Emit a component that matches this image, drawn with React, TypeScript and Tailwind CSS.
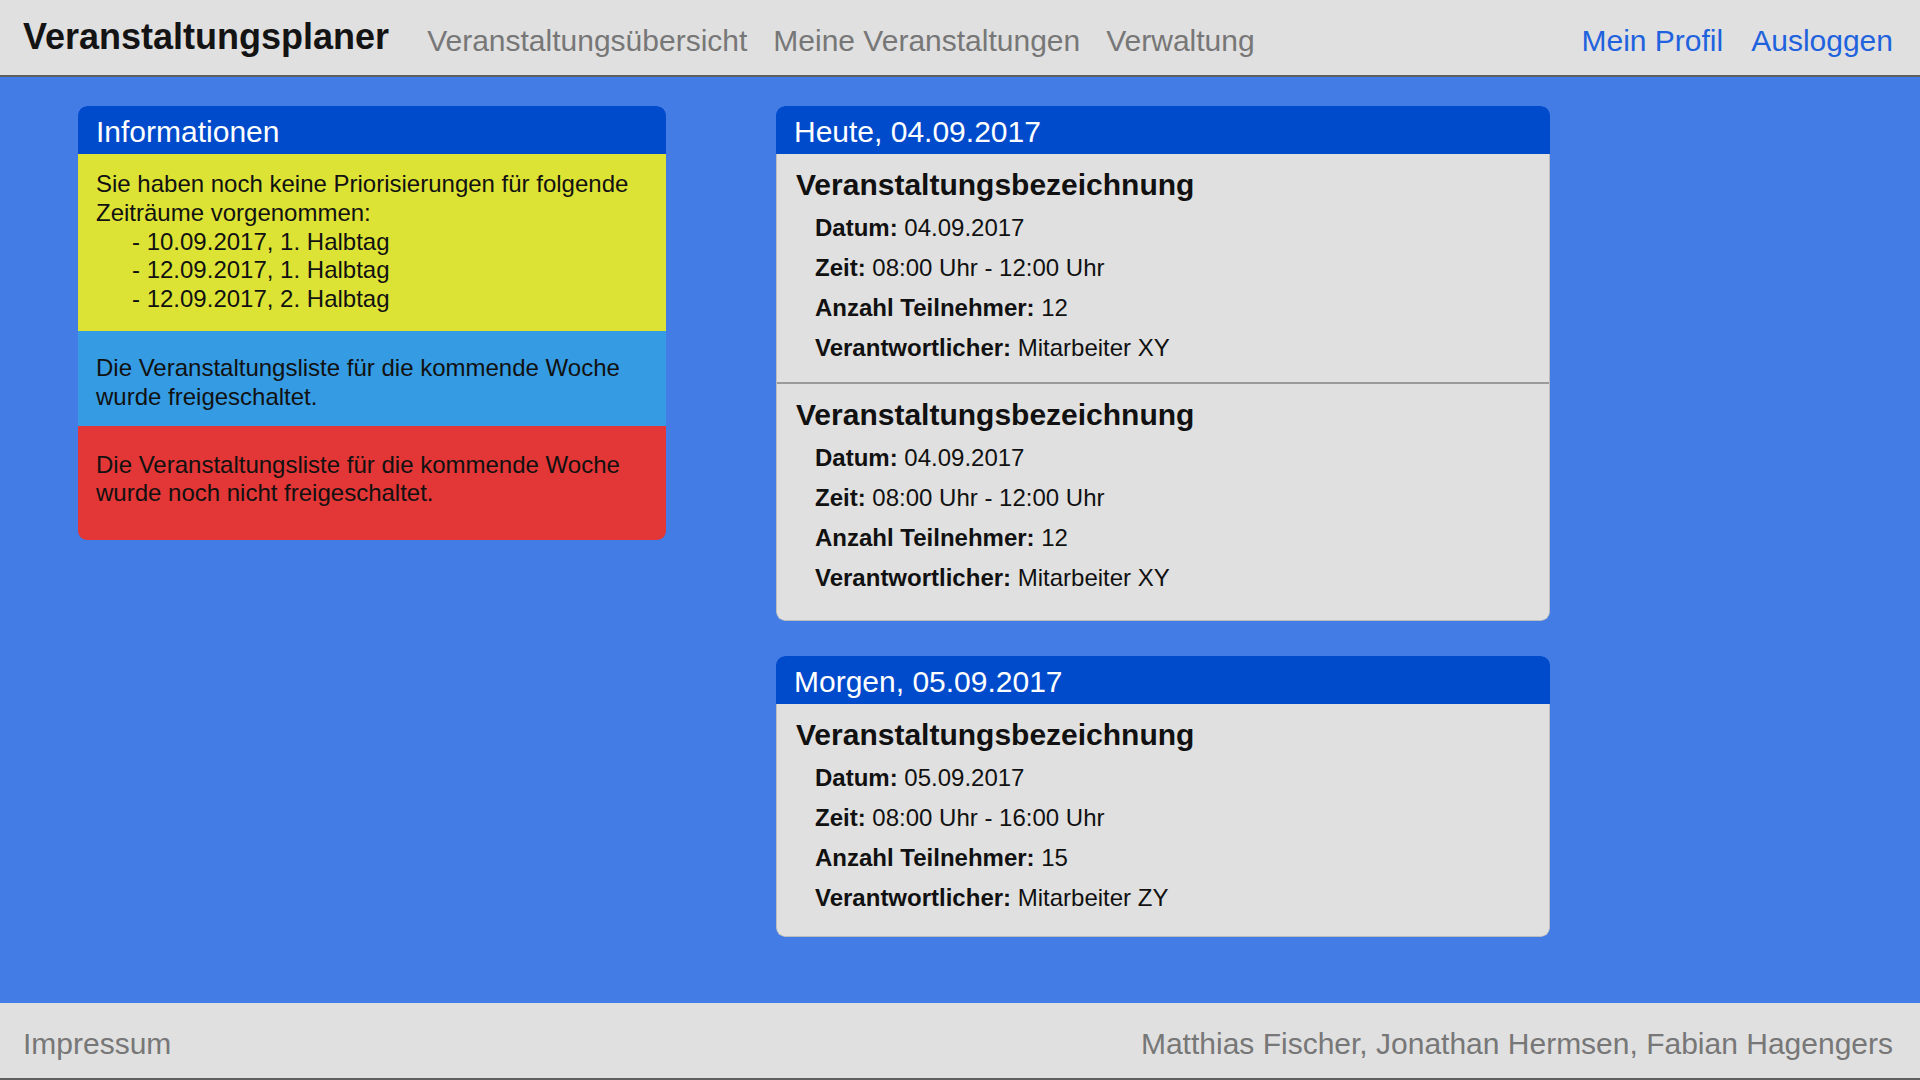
import React from "react";

const font = { fontFamily: '"Liberation Sans", Arial, Helvetica, sans-serif' };

type Ev = { datum: string; zeit: string; anzahl: string; verant: string };

function EventBlock({ ev, pb, sep }: { ev: Ev; pb: string; sep?: boolean }) {
  return (
    <div className={`pt-[13px] ${pb} ${sep ? "border-b-2 border-[#9a9a9a]" : ""}`}>
      <div className="pl-[19px] text-[30px] leading-[36px] font-bold text-[#111] mb-[5px]">
        Veranstaltungsbezeichnung
      </div>
      <div className="pl-[38px] text-[24px] leading-[40px] text-[#111]">
        <div>
          <span className="font-bold">Datum:</span> {ev.datum}
        </div>
        <div>
          <span className="font-bold">Zeit:</span> {ev.zeit}
        </div>
        <div>
          <span className="font-bold">Anzahl Teilnehmer:</span> {ev.anzahl}
        </div>
        <div>
          <span className="font-bold">Verantwortlicher:</span> {ev.verant}
        </div>
      </div>
    </div>
  );
}

function PanelHeader({ children }: { children: React.ReactNode }) {
  return (
    <div className="h-[48px] bg-[#004bcc] rounded-t-[9px] pl-[18px] pt-[8px] text-[30px] leading-[36px] text-white">
      {children}
    </div>
  );
}

export default function App() {
  const e1: Ev = { datum: "04.09.2017", zeit: "08:00 Uhr - 12:00 Uhr", anzahl: "12", verant: "Mitarbeiter XY" };
  const e2: Ev = { datum: "05.09.2017", zeit: "08:00 Uhr - 16:00 Uhr", anzahl: "15", verant: "Mitarbeiter ZY" };
  return (
    <div className="min-h-screen h-[1080px] flex flex-col bg-[#427ce4]" style={font}>
      <header className="h-[77px] shrink-0 bg-[#e0e0e0] border-b-2 border-[#5f5f5f] flex items-start pl-[23px] pr-[27px]">
        <div className="mt-[17px] text-[36px] leading-[40px] font-bold text-[#141414]">Veranstaltungsplaner</div>
        <nav className="mt-[23px] ml-[38px] flex gap-[26px] text-[30px] leading-[36px] text-[#777777]">
          <span>Veranstaltungsübersicht</span>
          <span>Meine Veranstaltungen</span>
          <span>Verwaltung</span>
        </nav>
        <div className="ml-auto mt-[23px] flex gap-[28px] text-[30px] leading-[36px] text-[#1f62dd]">
          <span>Mein Profil</span>
          <span>Ausloggen</span>
        </div>
      </header>

      <main className="flex-1 flex items-start pt-[29px] pl-[78px] gap-[110px]">
        <section className="w-[588px] rounded-[9px] overflow-hidden">
          <PanelHeader>Informationen</PanelHeader>
          <div className="bg-[#dde335] pl-[18px] pr-[18px] pt-[16px] pb-[17px] text-[24px] leading-[1.2] text-[#111]">
            <div>Sie haben noch keine Priorisierungen für folgende Zeiträume vorgenommen:</div>
            <div className="pl-[36px]">
              <div>- 10.09.2017, 1. Halbtag</div>
              <div>- 12.09.2017, 1. Halbtag</div>
              <div>- 12.09.2017, 2. Halbtag</div>
            </div>
          </div>
          <div className="bg-[#359be2] pl-[18px] pr-[18px] pt-[23px] pb-[14px] text-[24px] leading-[1.2] text-[#111]">
            Die Veranstaltungsliste für die kommende Woche wurde freigeschaltet.
          </div>
          <div className="bg-[#e33636] pl-[18px] pr-[18px] pt-[25px] pb-[32px] text-[24px] leading-[1.2] text-[#111]">
            Die Veranstaltungsliste für die kommende Woche wurde noch nicht freigeschaltet.
          </div>
        </section>

        <section className="w-[774px] flex flex-col gap-[35px]">
          <div className="rounded-[9px] overflow-hidden">
            <PanelHeader>Heute, 04.09.2017</PanelHeader>
            <div className="bg-[#e0e0e0] rounded-b-[9px] border border-t-0 border-[#bdbdbd]">
              <EventBlock ev={e1} pb="pb-[14px]" sep />
              <EventBlock ev={{ ...e1 }} pb="pb-[22px]" />
            </div>
          </div>
          <div className="rounded-[9px] overflow-hidden">
            <PanelHeader>Morgen, 05.09.2017</PanelHeader>
            <div className="bg-[#e0e0e0] rounded-b-[9px] border border-t-0 border-[#bdbdbd]">
              <EventBlock ev={e2} pb="pb-[18px]" />
            </div>
          </div>
        </section>
      </main>

      <footer className="h-[77px] shrink-0 bg-[#e0e0e0] border-b-2 border-[#5f5f5f] flex items-start justify-between pl-[23px] pr-[27px] pt-[23px] text-[30px] leading-[36px] text-[#777777]">
        <span>Impressum</span>
        <span>Matthias Fischer, Jonathan Hermsen, Fabian Hagengers</span>
      </footer>
    </div>
  );
}
